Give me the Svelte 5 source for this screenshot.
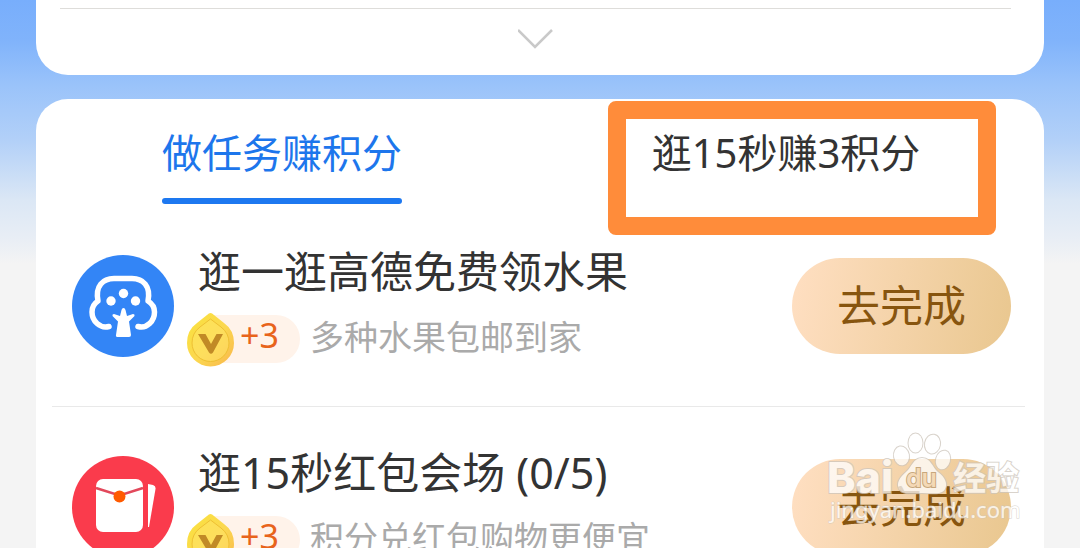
<script>
  let active = $state(0);
  const tabs = ['做任务赚积分', '逛15秒赚3积分'];
  const tasks = [
    { icon: 'tree', title: '逛一逛高德免费领水果', points: '+3', note: '多种水果包邮到家' },
    { icon: 'packet', title: '逛15秒红包会场 (0/5)', points: '+3', note: '积分兑红包购物更便宜' },
  ];
</script>

<main class="page">
  <section class="card summary">
    <hr />
    <button class="expand" aria-label="展开">
      <svg width="36" height="22" viewBox="0 0 36 22" fill="none" stroke="#c9c9c9" stroke-width="2.500">
        <path d="M0 1 L17 18 L34 1" />
      </svg>
    </button>
  </section>

  <section class="card tasks">
    <div class="tabs">
      {#each tabs as tab, i}
        <button class="tab" class:active={active === i} onclick={() => (active = i)}>
          <span>{tab}</span>
          {#if i === 1}<i class="frame"></i>{/if}
        </button>
      {/each}
    </div>

    <ul>
      {#each tasks as task}
        <li class="row">
          {#if task.icon === 'tree'}
            <svg class="icon" viewBox="0 0 102 102">
              <circle cx="51" cy="51" r="51" fill="#3385f6" />
              <path d="M37 71.500 C28 74 20 66 20 57 C20 52 22 48.500 26 46 C23 31 31 23.500 42 23.500 L60 23.500 C71 23.500 79 31 76 46 C80 48.500 82.500 52 82.500 57 C82.500 66 75 74 66 71.500" fill="none" stroke="#fff" stroke-width="5.500" stroke-linecap="round" stroke-linejoin="round" />
              <g fill="#fff">
                <circle cx="39" cy="46" r="4.700" />
                <circle cx="51.500" cy="38.500" r="4.700" />
                <circle cx="63.500" cy="46" r="4.700" />
                <path d="M51.500 53 Q53 53 53.500 55 L55 61 L61 59 Q63 59 62.500 61 L57 66.500 L59 80 Q59 82 57 82 L46 82 Q43.500 82 44 80 L46 66.500 L40.500 61 Q40 59 42 59 L48 61 L49.500 55 Q50 53 51.500 53 Z" />
              </g>
            </svg>
          {:else}
            <svg class="icon" viewBox="0 0 102 102">
              <circle cx="51" cy="51" r="51" fill="#fa3b4c" />
              <rect x="24" y="23" width="47" height="53" rx="7" fill="#fff" />
              <path d="M24 32 L47.500 39.500 L71 32" fill="none" stroke="#e2485b" stroke-width="2.500" />
              <circle cx="47.500" cy="40.500" r="6" fill="#ff5a00" />
              <path d="M76 28 L81 29 Q84 30 83.500 33 L77 71 L76 71 Z" fill="#fff" />
            </svg>
          {/if}
          <div class="body">
            <h2>{task.title}</h2>
            <div class="meta">
              <span class="points">
                <svg class="coin" width="47" height="54" viewBox="0 0 47 54">
                  <defs>
                    <linearGradient id="coin-{task.icon}" x1="0" y1="0" x2="1" y2="1">
                      <stop offset="0" stop-color="#fae33c" />
                      <stop offset="0.550" stop-color="#fbd750" />
                      <stop offset="1" stop-color="#f9b64c" />
                    </linearGradient>
                  </defs>
                  <path d="M23.500 0 Q25 0 27 2 L37 10 Q47 17 47 30 A23.500 23.500 0 0 1 0 30 Q0 17 10 10 L20 2 Q22 0 23.500 0 Z" fill="url(#coin-{task.icon})" />
                  <path d="M23.500 6 L34 14 Q42 20 42 30 A18.500 18.500 0 0 1 5 30 Q5 20 13 14 Z" fill="#ffe66a" fill-opacity="0.500" stroke="#eec033" stroke-width="1" />
                  <path d="M11 21 L18.500 21 L24 31 L29.500 21 L36 21 L26 39.500 Q24 42 22 39.500 Z" fill="#c18a26" />
                </svg>
                {task.points}
              </span>
              <span class="note">{task.note}</span>
            </div>
          </div>
          <button class="go">去完成</button>
        </li>
      {/each}
    </ul>
  </section>

  <svg class="watermark" width="200" height="96" viewBox="0 0 200 96" aria-hidden="true">
    <g class="mark">
      <ellipse cx="77.500" cy="24" rx="7.500" ry="9.500" transform="rotate(-10 77 24)" />
      <ellipse cx="91.500" cy="11" rx="7" ry="9.500" />
      <ellipse cx="108.500" cy="12" rx="7.500" ry="9.500" transform="rotate(10 108 12)" />
      <ellipse cx="119" cy="28" rx="7" ry="9.500" transform="rotate(15 119 28)" />
      <path d="M98 26 C107 26 108 35 114 40 C121 45 124 52 121 57 C118 63 108 61 98 61 C88 61 79 63 75 57 C72 51 76 45 82 40 C88 35 89 26 98 26 Z" />
      <text class="latin" x="3" y="61" font-size="43">Bai</text>
      <text class="han" x="129" y="58" font-size="33">经验</text>
      <text class="url" x="6" y="86" font-size="22">jingyan.baidu.com</text>
      <text class="du" x="82" y="55" font-size="25">du</text>
    </g>
  </svg>
</main>

<style>
  :global(body) {
    margin: 0;
    background: #f4f4f4;
  }
  .page {
    position: relative;
    box-sizing: border-box;
    height: 100vh;
    overflow: hidden;
    padding: 0 36px;
    font-family: 'Noto Sans', 'Noto Sans CJK SC', sans-serif;
    color: #333;
    background: linear-gradient(#78aefc 0, #80b3fb 40px, #9ac3fa 85px, #b2d0f8 140px, #dbe7f5 200px, #e9eef5 240px, #f4f4f4 264px);
  }
  button {
    border: 0;
    margin: 0;
    padding: 0;
    font: inherit;
    color: inherit;
    background: none;
    cursor: pointer;
  }
  .card {
    background: #fff;
    border-radius: 32px;
  }
  .summary {
    padding: 8px 33px 12px 24px;
    border-radius: 0 0 32px 32px;
  }
  hr {
    margin: 0;
    border: 0;
    height: 1px;
    background: #deddda;
  }
  .expand {
    display: flex;
    justify-content: center;
    width: 100%;
    padding: 20px 0 12px;
  }
  .tasks {
    margin-top: 24px;
  }
  .tabs {
    display: grid;
    grid-template-columns: 1fr 1fr;
  }
  .tab {
    position: relative;
    display: flex;
    justify-content: center;
    padding: 30px 12px 2px 0;
    font-size: 40px;
    line-height: 48px;
  }
  .tab span {
    position: relative;
    padding-bottom: 27px;
  }
  .tab.active {
    color: #1d76ec;
  }
  .tab.active span::after {
    content: '';
    position: absolute;
    left: 0;
    right: 0;
    bottom: 0;
    height: 6px;
    border-radius: 3px;
    background: #1d78f0;
  }
  .frame {
    position: absolute;
    box-sizing: border-box;
    left: 68px;
    right: 48px;
    top: 2px;
    height: 134px;
    border: 18px solid #ff8c3a;
    border-radius: 8px;
  }
  ul {
    list-style: none;
    margin: 0 19px 0 16px;
    padding: 0;
  }
  .row {
    display: flex;
    align-items: center;
    gap: 24px;
    padding: 40px 14px 40px 20px;
    border-bottom: 1px solid #e9e9e9;
  }
  .icon {
    flex: none;
    width: 102px;
    height: 102px;
  }
  .body {
    flex: 1;
    min-width: 0;
  }
  h2 {
    margin: 0 0 14px;
    font-size: 43px;
    line-height: 52px;
    font-weight: 400;
    white-space: nowrap;
  }
  .meta {
    display: flex;
    align-items: center;
    gap: 10px;
    height: 54px;
    margin-left: 12px;
    white-space: nowrap;
  }
  .points {
    position: relative;
    box-sizing: border-box;
    width: 90px;
    height: 48px;
    padding-left: 30px;
    border-radius: 0 24px 24px 0;
    background: #fff3ea;
    color: #e8641b;
    font-size: 34px;
    line-height: 40px;
  }
  .coin {
    position: absolute;
    left: -23px;
    top: -2px;
  }
  .note {
    font-size: 34px;
    line-height: 48px;
    padding-bottom: 4px;
    color: #aaa;
  }
  .go {
    flex: none;
    width: 219px;
    height: 96px;
    border-radius: 48px;
    background: linear-gradient(100deg, #ffdfc2, #e9c78f);
    color: #87550f;
    font-size: 43px;
    line-height: 96px;
  }
  .watermark {
    position: absolute;
    right: 56px;
    top: 432px;
    pointer-events: none;
  }
  .mark {
    fill: #fff;
    stroke: #cdc5bb;
    stroke-width: 2px;
    paint-order: stroke;
    opacity: 0.75;
  }
  .latin {
    font-family: Inter, sans-serif;
    font-weight: 800;
  }
  .han {
    font-weight: 700;
  }
  .url {
    font-family: 'Noto Sans', sans-serif;
    stroke-width: 1px;
  }
  .du {
    font-family: Inter, sans-serif;
    font-weight: 600;
    fill: #f5dcbc;
    stroke: #b99a70;
  }
</style>
